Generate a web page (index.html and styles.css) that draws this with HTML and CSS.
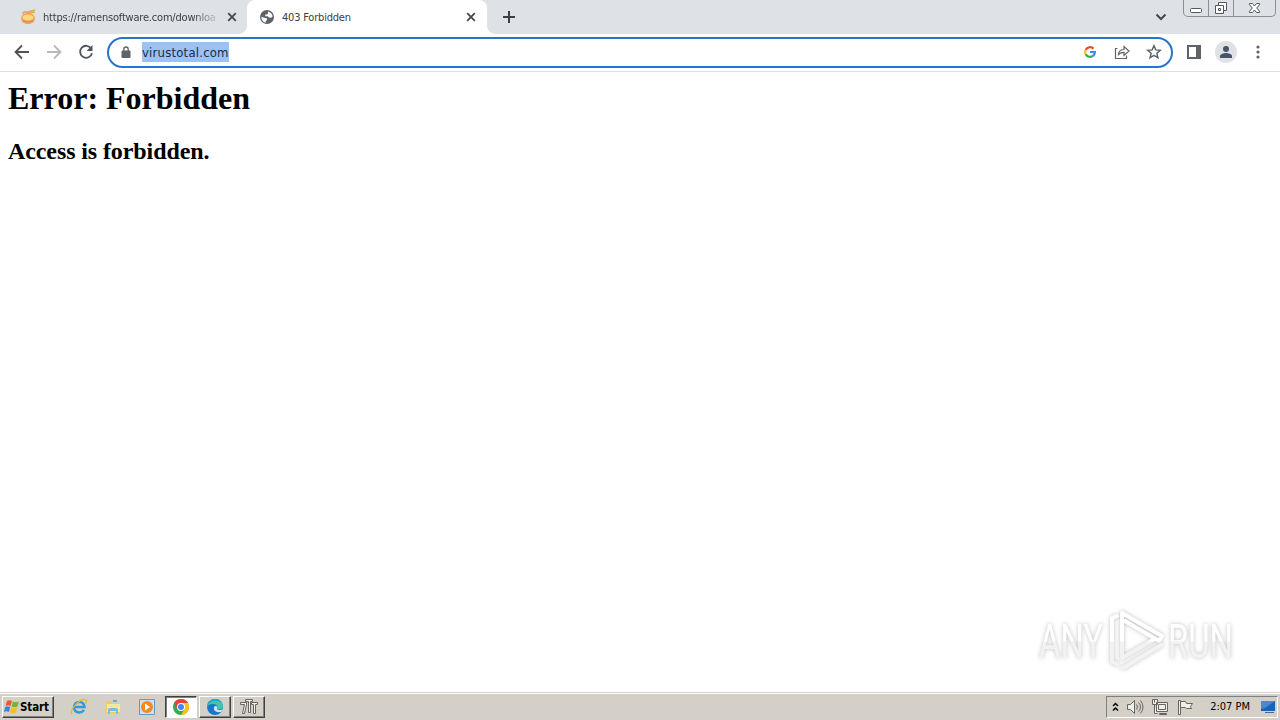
FILE: index.html
```
<!DOCTYPE html>
<html lang="en">
<head>
    <meta charset="UTF-8">
    <title>403 Forbidden</title>
    <link rel="stylesheet" href="styles.css">
</head>
<body>
    <header class="tab-strip">
        <div class="tab">
            <svg class="favicon" width="16" height="16" viewBox="0 0 16 16">
                <ellipse cx="8" cy="9.500" rx="7" ry="5.500" fill="#eda35c"/>
                <path d="M3 5c0-3 3-2 5-2l7-2M5 5l10-2" fill="none" stroke="#e3a55f" stroke-width="1.500"/>
                <ellipse cx="8" cy="8.500" rx="5.500" ry="3" fill="#f8d988"/>
                <path d="M3 12q5 2 10 0" fill="none" stroke="#d98b50"/>
            </svg>
            <span class="tab-title fade">https://ramensoftware.com/downloa</span>
            <svg class="tab-close" width="10" height="10" viewBox="0 0 10 10"><path d="M1.200 1.200l7.600 7.600M8.800 1.200L1.200 8.800"/></svg>
        </div>
        <div class="tab active">
            <svg class="favicon" width="16" height="16" viewBox="0 0 16 16">
                <circle cx="8" cy="8" r="7" fill="#5f6368"/>
                <path d="M2.400 7.700l3.500 1.400 2 .2v1.900l-1.200.8v1.700C4 13.200 2.300 10.700 2.400 7.700zM9 2.400c2.500.5 4.400 2.500 4.600 5.200l-1.500 1.200-2.200-.2-1-1.400H6.300V5.500h1.900l.8-1.200z" fill="#fff"/>
            </svg>
            <span class="tab-title">403 Forbidden</span>
            <svg class="tab-close" width="10" height="10" viewBox="0 0 10 10"><path d="M1.200 1.200l7.600 7.600M8.800 1.200L1.200 8.800"/></svg>
        </div>
        <svg class="new-tab" width="12" height="12" viewBox="0 0 12 12"><path d="M6 0v12M0 6h12"/></svg>
        <svg class="tab-search" width="12" height="8" viewBox="0 0 12 8"><path d="M1.500 1.500L6 6l4.500-4.500"/></svg>
        <div class="window-buttons">
            <span class="win-btn minimize"><svg width="14" height="7" viewBox="0 0 14 7"><rect x="1.500" y="1.500" width="11" height="4" rx="1"/></svg></span>
            <span class="win-btn restore"><svg width="14" height="14" viewBox="0 0 14 14"><path d="M4.500 4.500v-3h8v8h-3"/><path d="M1.500 4.500h8v8h-8z"/><path d="M4.500 7.500h2v2h-2z"/></svg></span>
            <span class="win-btn close"><svg width="13" height="12" viewBox="0 0 13 12"><path d="M1.500 1.500h3l2 2.500 2-2.500h3v1.200L8.700 6l2.800 3.300v1.200h-3L6.500 8l-2 2.500h-3V9.300L4.300 6 1.500 2.700z"/></svg></span>
        </div>
    </header>

    <nav class="toolbar">
        <svg class="nav-icon" width="16" height="16" viewBox="0 0 16 16"><path d="M15 8H2M8 1.500L1.500 8 8 14.500"/></svg>
        <svg class="nav-icon disabled" width="16" height="16" viewBox="0 0 16 16"><path d="M1 8h13M8 1.500L14.500 8 8 14.500"/></svg>
        <svg class="nav-icon" width="16" height="16" viewBox="0 0 16 16"><path d="M13.200 4.500A6 6 0 1 0 14 9.200"/><path d="M14.500 1v6h-6z" class="solid"/></svg>
        <div class="address-bar">
            <svg class="lock" width="10" height="13" viewBox="0 0 10 13"><path d="M2.800 5V3.200a2.200 2.200 0 0 1 4.400 0V5" fill="none" stroke="#5f6368" stroke-width="1.300"/><rect x=".5" y="4.500" width="9" height="7.500" rx="1" fill="#5f6368"/></svg>
            <span class="url">virustotal.com</span>
            <svg class="google" width="12" height="12" viewBox="0 0 12 12" fill="none" stroke-width="2.200">
                <path d="M9.500 2.600A4.900 4.900 0 0 0 1.700 3.800" stroke="#ea4335"/>
                <path d="M1.700 3.800a4.900 4.900 0 0 0 0 4.400" stroke="#fbbc05"/>
                <path d="M1.700 8.200a4.900 4.900 0 0 0 7.500 1.500" stroke="#34a853"/>
                <path d="M9.200 9.700A4.900 4.900 0 0 0 10.900 6H6" stroke="#4285f4"/>
            </svg>
            <svg class="share" width="16" height="15" viewBox="0 0 16 15"><path d="M3.500 3.500h-2v10h11v-3"/><path d="M4.500 9.500c.3-3.500 2.300-5 5.500-5v-3l5 4.500-5 4.500V7.300c-2.500 0-4 .5-5.500 2.200z"/></svg>
            <svg class="star" width="16" height="16" viewBox="0 0 16 16"><path d="M8 1.700l1.800 4.200 4.500.4-3.400 3 1 4.500L8 11.400l-3.900 2.400 1-4.500-3.400-3 4.500-.4z"/></svg>
        </div>
        <svg class="side-panel" width="14" height="14" viewBox="0 0 14 14"><path d="M1 1h12v12H1z" fill="none" stroke="#5f6368" stroke-width="2"/><path d="M9 1h4v12H9z" fill="#5f6368"/></svg>
        <span class="avatar"><svg width="14" height="14" viewBox="0 0 14 14"><circle cx="7" cy="4" r="3"/><path d="M1 13v-2c0-2 4-3 6-3s6 1 6 3v2z"/></svg></span>
        <svg class="menu" width="4" height="14" viewBox="0 0 4 14" fill="#5f6368"><circle cx="2" cy="2" r="1.600"/><circle cx="2" cy="7" r="1.600"/><circle cx="2" cy="12" r="1.600"/></svg>
    </nav>

    <main class="page">
        <h1>Error: Forbidden</h1>
        <h2>Access is forbidden.</h2>
        <svg class="watermark" width="210" height="70" viewBox="0 0 210 70">
            <defs>
                <linearGradient id="fade" gradientUnits="userSpaceOnUse" x1="0" y1="0" x2="0" y2="70">
                    <stop offset=".53" stop-color="#fff"/>
                    <stop offset=".54" stop-color="#f2f2f2"/>
                </linearGradient>
            </defs>
            <g fill="url(#fade)">
                <text x="9" y="54" textLength="64" lengthAdjust="spacingAndGlyphs">ANY</text>
                <text x="138" y="54" textLength="65" lengthAdjust="spacingAndGlyphs">RUN</text>
            </g>
            <g class="mark" stroke="url(#fade)">
                <path d="M87 12l-5 2v44l5 2"/>
                <path d="M92 54V9l40 23-3 5-34-20"/>
                <path d="M92 54l31-18M93 64l38-23"/>
            </g>
        </svg>
    </main>

    <footer class="taskbar">
        <div class="start">
            <svg width="16" height="16" viewBox="0 0 16 16">
                <path d="M3 2c2-1 3-1 5 0L6.500 7C5 6 3.500 6 1.500 7z" fill="#e85b24"/>
                <path d="M9 2.500c2 1 4 1 6 0L13.500 7.500c-2 1-4 1-6 0z" fill="#73b52e"/>
                <path d="M1.200 8c2-1 3.300-1 5 0L5 13c-2-1-3-1-5 0z" fill="#3c86d6"/>
                <path d="M7.200 8.500c2 1 4 1 6 0L12 13.500c-2 1-4 1-6 0z" fill="#f6bd25"/>
            </svg>
            <span>Start</span>
        </div>
        <div class="quick-launch">
            <svg width="18" height="18" viewBox="0 0 18 18">
                <path d="M4 9h10.500C14 2 5 2.500 4 9c0 6 7 7 10 3" fill="none" stroke="#359bd8" stroke-width="2.600"/>
                <path d="M2 16C-1 12 11-1 16 2c1 1 0 3-1 4" fill="none" stroke="#e7b63c" stroke-width="1.300"/>
            </svg>
            <svg width="18" height="18" viewBox="0 0 18 18">
                <path d="M2 3h5l1 2h7v10H2z" fill="#edcb66"/>
                <path d="M3 6h13v8H3z" fill="#fae69c"/>
                <path d="M4 16v-4q0-2 2-2h6q2 0 2 2v4h-2v-3H6v3z" fill="#79bddf"/>
                <path d="M9 3h4" stroke="#5baed9" stroke-width="2"/>
            </svg>
            <svg width="18" height="18" viewBox="0 0 18 18">
                <path d="M1.500 1.500h15v15h-15z" fill="#cce2f1" stroke="#5f9acb"/>
                <circle cx="9" cy="9" r="6" fill="#f18b20"/>
                <path d="M7 5.500v7L12 9z" fill="#fff"/>
            </svg>
        </div>
        <div class="tasks">
            <span class="task pressed"><svg width="18" height="18" viewBox="0 0 18 18">
                <circle cx="9" cy="9" r="8" fill="#34a853"/>
                <path d="M9 9L2.100 5A8 8 0 0 1 16 5z" fill="#ea4335"/>
                <path d="M9 5h7A8 8 0 0 1 9 17l3.500-6z" fill="#fbc116"/>
                <path d="M2.100 5l3.500 6L9 8 8 5z" fill="#ea4335"/>
                <circle cx="9" cy="9" r="4" fill="#fff"/><circle cx="9" cy="9" r="3" fill="#4285f4"/>
            </svg></span>
            <span class="task"><svg width="18" height="18" viewBox="0 0 18 18">
                <circle cx="9" cy="9" r="8" fill="#1676c9"/>
                <path d="M1 9C1 4 5 1 9 1c5 0 8 4 8 7 0 4-5 4-6 3 1-2 0-5-4-5-3 0-5 1-6 3z" fill="#43c6a5"/>
                <path d="M1 8C2 3 6 1 10 1c3 0 5 2 6 4C10 1 4 3 1 8z" fill="#249fd2"/>
                <path d="M9 8c-3 3 0 7 6 6l2-3c-3 2-6 1-6 0 0-1 1-3-2-3z" fill="#d8e7ed"/>
            </svg></span>
            <span class="task"><svg width="18" height="18" viewBox="0 0 18 18"><path d="M.5 4.500h6v2l-2 9h-2l2-9h-4zM5.500 1.500h7v2h-2v11h-2v-11h-3zM11.500 4.500h6v2h-2v9h-2v-9h-2z" fill="#f2f1ed" stroke="#66645f"/></svg></span>
        </div>
        <div class="tray">
            <svg class="chevrons" width="7" height="10" viewBox="0 0 7 10"><path d="M1 4l2.500-2.500L6 4M1 8.500L3.500 6 6 8.500"/></svg>
            <svg width="18" height="18" viewBox="0 0 18 18"><path d="M1.500 6.500h3l4-4v13l-4-4h-3z"/><path class="line" d="M10.500 6.500q2 2.500 0 5M12.500 4.500q4 4.500 0 9M14.500 2.500q5 6.500 0 13"/></svg>
            <svg width="18" height="18" viewBox="0 0 18 18"><path d="M5.500 4.500h11v9h-11zM7.500 6.500h7v5h-7zM8.500 15.500h7v1h-7zM1.500 1.500h5v5h-5zM3.500 1.500v3M3.500 6.500v9h3"/></svg>
            <svg width="18" height="18" viewBox="0 0 18 18"><path d="M2.500 2.500h2v14h-2zM4.500 3.500h5l1 2h6l-2 3 1 2h-5l-1-1h-5z"/></svg>
            <span class="clock">2:07 PM</span>
            <svg class="desktop" width="16" height="16" viewBox="0 0 16 16"><path d="M1 2h14v10H1z" fill="#1963b9"/><path d="M1 2h14L5 9l-4 1z" fill="#438cd5"/><path d="M5 13h9v1H5z" fill="#44698c"/></svg>
        </div>
    </footer>
</body>
</html>
```
FILE: styles.css
```
* {
    box-sizing: border-box;
}

body {
    margin: 0;
    width: 1280px;
    height: 720px;
    overflow: hidden;
    display: flex;
    flex-direction: column;
    background: #fff;
    font-family: "DejaVu Sans Condensed", "DejaVu Sans", sans-serif;
    font-size: 11px;
    color: #3c4043;
}

svg {
    display: block;
    flex: none;
}

/* Tabs */
.tab-strip {
    height: 34px;
    display: flex;
    align-items: flex-start;
    background: #dee1e6;
}

.tab {
    width: 247px;
    height: 34px;
    padding: 0 10px 0 20px;
    display: flex;
    align-items: center;
    background: radial-gradient(circle at 0 0, transparent 7.5px, #fff 8px) right bottom / 8px 8px no-repeat;
}

.tab.active {
    width: 240px;
    padding: 0 11px 0 12px;
    background: #fff;
    border-radius: 8px 8px 0 0;
}

/* curved foot on the right of the active tab */
.tab.active::after {
    content: "";
    width: 8px;
    height: 8px;
    margin-right: -19px;
    margin-left: 11px;
    align-self: flex-end;
    background: radial-gradient(circle at 100% 0, transparent 7.5px, #fff 8px);
}

.favicon {
    margin-right: 7px;
}

.tab-title {
    flex: 1;
    white-space: nowrap;
    letter-spacing: -0.2px;
}

.fade {
    letter-spacing: -0.2px;
    mask-image: linear-gradient(to right, #000 150px, transparent 178px);
}

.tab-close {
    margin-left: 8px;
    fill: none;
    stroke: #45494d;
    stroke-width: 1.8;
}

.new-tab {
    margin: 11px 0 0 16px;
    stroke: #3c4043;
    stroke-width: 2;
}

.tab-search {
    margin: 13px 16px 0 auto;
    fill: none;
    stroke: #45494d;
    stroke-width: 2;
}

.window-buttons {
    width: 93px;
    height: 17px;
    margin-right: 4px;
    display: flex;
    border: 1px solid #8b8f96;
    border-top: 0;
    border-radius: 0 0 5px 5px;
}

.win-btn {
    width: 25px;
    display: flex;
    align-items: center;
    justify-content: center;
    border-right: 1px solid #8b8f96;
}

.win-btn svg {
    fill: #fff;
    stroke: #55585d;
}

.minimize {
    padding-top: 4px;
}

.win-btn.close {
    flex: 1;
    border: 0;
}

/* Toolbar */
.toolbar {
    height: 38px;
    padding: 0 20px 1px 14px;
    display: flex;
    align-items: center;
    border-bottom: 1px solid #dedfe2;
}

.nav-icon {
    margin-right: 16px;
    fill: none;
    stroke: #50545a;
    stroke-width: 1.8;
}

.nav-icon .solid {
    fill: #50545a;
    stroke: none;
}

.nav-icon.disabled {
    stroke: #b6b8bb;
}

.address-bar {
    width: 1066px;
    height: 31px;
    margin-left: -3px;
    padding: 0 9px 0 12px;
    display: flex;
    align-items: center;
    border: 2px solid #2874ca;
    border-radius: 16px;
}

.lock {
    margin-right: 11px;
}

.url {
    height: 20px;
    margin-right: auto;
    padding-top: 1px;
    line-height: 20px;
    font-family: "DejaVu Sans Condensed", "DejaVu Sans", sans-serif;
    font-size: 13px;
    letter-spacing: 0.2px;
    color: #182c48;
    background: #9cc1f3;
}

.share {
    margin: 0 16px 0 18px;
}

.share,
.star {
    fill: none;
    stroke: #5f6368;
    stroke-width: 1.2;
}

.star {
    stroke-width: 1.5;
}

.side-panel {
    margin-left: 14px;
}

.avatar {
    width: 22px;
    height: 22px;
    margin: 0 auto 0 14px;
    display: flex;
    align-items: center;
    justify-content: center;
    border-radius: 50%;
    background: #dee1e6;
    fill: #47536b;
}

/* Page */
.page {
    position: relative;
    flex: 1;
    padding: 8px 8px;
    font-family: "Liberation Serif", serif;
    color: #000;
}

h1 {
    margin: 0;
    font-size: 32px;
    line-height: 36px;
}

h2 {
    margin: 22px 0 0;
    font-size: 24px;
    line-height: 27px;
    letter-spacing: -0.1px;
}

.watermark {
    position: absolute;
    right: 40px;
    bottom: 18px;
    overflow: visible;
    filter: drop-shadow(0 0 2px rgba(0, 0, 0, 0.25));
    font-family: Roboto, sans-serif;
    font-size: 49px;
}

.mark {
    fill: none;
    stroke-width: 4;
    stroke-linejoin: round;
    stroke-linecap: round;
}

/* Taskbar */
.taskbar {
    height: 28px;
    padding: 1px 2px 1px;
    display: flex;
    align-items: center;
    background: #d4d0c8;
    border-top: 1px solid #d4d0c8;
    box-shadow: inset 0 1px #fff;
    color: #000;
}

.start,
.task {
    height: 22px;
    display: flex;
    align-items: center;
    border: 1px solid;
    border-color: #fff #404040 #404040 #fff;
    box-shadow: inset -1px -1px #808080;
}

.start {
    width: 52px;
    padding-left: 1px;
    font-weight: bold;
    font-size: 11.5px;
    letter-spacing: -0.1px;
}

.quick-launch {
    display: flex;
    gap: 16px;
    margin: 0 9px 0 16px;
}

.tasks {
    display: flex;
    gap: 2px;
}

.task {
    width: 32px;
    justify-content: center;
}

.task.pressed {
    background: #fff;
    border-color: #404040 #fff #fff #404040;
    box-shadow: inset 1px 1px #808080;
}

.tray {
    width: 172px;
    height: 22px;
    margin-left: auto;
    padding: 0 1px 0 5px;
    display: flex;
    align-items: center;
    gap: 6px;
    border: 1px solid;
    border-color: #808080 #fff #fff #808080;
}

.tray svg {
    fill: #eeeeea;
    stroke: #66655f;
}

.tray svg + svg {
    margin-left: 1px;
}

.tray .line {
    fill: none;
}

.tray .chevrons {
    fill: none;
    stroke: #000;
    stroke-width: 1.5;
}

.clock {
    margin-left: auto;
    white-space: nowrap;
}

.tray .desktop {
    margin-left: 4px;
    stroke: none;
}
```
